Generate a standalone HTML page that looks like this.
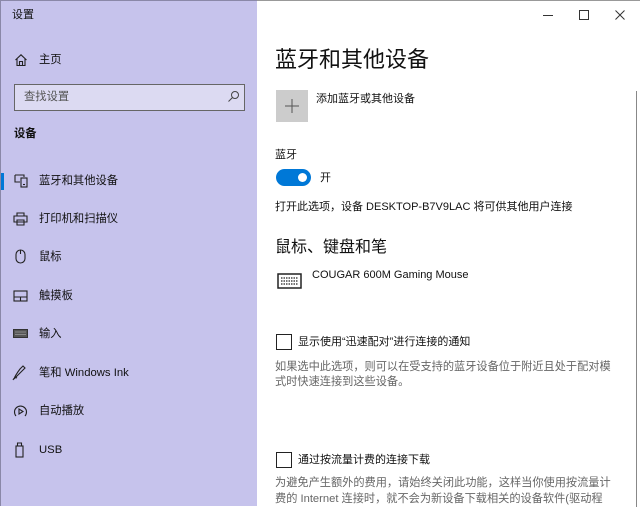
<!DOCTYPE html>
<html><head><meta charset="utf-8"><style>
*{margin:0;padding:0;box-sizing:border-box}
body{width:640px;height:506px;overflow:hidden;position:relative;font-family:"Liberation Sans","Noto Sans CJK SC",sans-serif;color:#111;background:#fff}
.side{position:absolute;left:0;top:0;width:257px;height:506px;background:#c6c3ec;border-left:1px solid #8a88a8;border-top:1px solid #8a88a8}
.main{position:absolute;left:257px;top:0;width:383px;height:506px;background:#fff;border-top:1px solid #999}
.t{position:absolute;white-space:nowrap;font-size:11.3px;line-height:14px}
.ic{position:absolute}
</style></head><body>
<div class="side">
<div class="t" style="left:11px;top:7px;font-size:11px">设置</div>
<svg class="ic" style="left:13px;top:52px" width="14" height="14" viewBox="0 0 14 14" fill="none" stroke="#222" stroke-width="1.1"><path d="M1.5 7L7 1.8L12.5 7M3 5.6V12.5H11V5.6M5.5 12.5V8.5H8.5V12.5"/></svg>
<div class="t" style="left:38px;top:52px">主页</div>
<div style="position:absolute;left:13px;top:83px;width:231px;height:27px;border:1px solid #666;background:#dcdaf2"></div>
<div class="t" style="left:23px;top:89px;color:#555">查找设置</div>
<svg class="ic" style="left:226px;top:89px" width="13" height="13" viewBox="0 0 13 13" fill="none" stroke="#444" stroke-width="1"><circle cx="8" cy="5" r="3.5"/><path d="M5.5 7.5L1.5 11.5"/></svg>
<div class="t" style="left:13px;top:126px;font-weight:bold">设备</div>
<div style="position:absolute;left:0;top:172px;width:3px;height:17px;background:#0078d7"></div>
<svg class="ic" style="left:13px;top:173px" width="15" height="14" viewBox="0 0 15 14" fill="none" stroke="#222" stroke-width="1.1"><path d="M1 1H10V3M1 1V8H6"/><rect x="7" y="4" width="6" height="9"/><path d="M9 10.5H11"/></svg>
<div class="t" style="left:38px;top:173px">蓝牙和其他设备</div>
<svg class="ic" style="left:12px;top:211px" width="15" height="14" viewBox="0 0 15 14" fill="none" stroke="#222" stroke-width="1.1"><path d="M4 4V1H11V4M1 4H14V10H1ZM4 8H11V13H4Z"/></svg>
<div class="t" style="left:38px;top:211px">打印机和扫描仪</div>
<svg class="ic" style="left:14px;top:248px" width="12" height="15" viewBox="0 0 12 15" fill="none" stroke="#222" stroke-width="1.1"><rect x="1" y="1" width="9" height="13" rx="4.5"/><path d="M5.5 1V5"/></svg>
<div class="t" style="left:38px;top:249px">鼠标</div>
<svg class="ic" style="left:12px;top:289px" width="15" height="12" viewBox="0 0 15 12" fill="none" stroke="#222" stroke-width="1.1"><rect x="1" y="1" width="13" height="10"/><path d="M1 7H14M7.5 7V11"/></svg>
<div class="t" style="left:38px;top:288px">触摸板</div>
<svg class="ic" style="left:12px;top:328px" width="15" height="10" viewBox="0 0 15 10"><rect x="0.5" y="0.5" width="14" height="8" fill="#555" stroke="#333"/><path d="M2 3H13M2 5.5H13" stroke="#999" stroke-width=".8"/></svg>
<div class="t" style="left:38px;top:326px">输入</div>
<svg class="ic" style="left:11px;top:364px" width="15" height="16" viewBox="0 0 15 16" fill="none" stroke="#222" stroke-width="1.1"><path d="M2 14C3 11 5 8 8 4L11 1L13 3L10 6C7 9 5 11 2 14ZM1 15C2 13 3 12 5 13"/></svg>
<div class="t" style="left:38px;top:365px">笔和 Windows Ink</div>
<svg class="ic" style="left:12px;top:403px" width="15" height="15" viewBox="0 0 15 15" fill="none" stroke="#222" stroke-width="1.1"><path d="M3 12A6 6 0 1 1 12 12"/><path d="M6 5V10L10 7.5Z"/></svg>
<div class="t" style="left:38px;top:403px">自动播放</div>
<svg class="ic" style="left:14px;top:441px" width="10" height="16" viewBox="0 0 10 16" fill="none" stroke="#222" stroke-width="1.1"><rect x="1" y="4" width="7" height="11"/><path d="M2.5 4V1H6.5V4"/></svg>
<div class="t" style="left:38px;top:442px">USB</div>
</div>
<div class="main">
<svg class="ic" style="left:285px;top:8px" width="12" height="12"><path d="M1 6.5H11" stroke="#333"/></svg>
<svg class="ic" style="left:321px;top:8px" width="12" height="12"><rect x="1.5" y="1.5" width="9" height="9" fill="none" stroke="#333"/></svg>
<svg class="ic" style="left:357px;top:8px" width="12" height="12"><path d="M1.5 1.5L10.5 10.5M10.5 1.5L1.5 10.5" stroke="#333"/></svg>
<div style="position:absolute;left:379px;top:90px;width:1px;height:416px;background:#888"></div>
<div class="t" style="left:18px;top:45px;font-size:22px;line-height:28px">蓝牙和其他设备</div>
<div style="position:absolute;left:19px;top:89px;width:32px;height:32px;background:#ccc"></div>
<svg class="ic" style="left:27px;top:97px" width="16" height="16"><path d="M8 1V15M1 8H15" stroke="#555" stroke-width="1"/></svg>
<div class="t" style="left:59px;top:91px;font-size:11px">添加蓝牙或其他设备</div>
<div class="t" style="left:18px;top:147px;font-size:11px">蓝牙</div>
<div style="position:absolute;left:19px;top:168px;width:35px;height:17px;border-radius:9px;background:#0078d7"></div>
<div style="position:absolute;left:41px;top:172px;width:9px;height:9px;border-radius:50%;background:#fff"></div>
<div class="t" style="left:63px;top:170px;font-size:11px">开</div>
<div class="t" style="left:18px;top:199px;font-size:11px">打开此选项，设备 DESKTOP-B7V9LAC 将可供其他用户连接</div>
<div class="t" style="left:18px;top:237px;font-size:16px;line-height:20px">鼠标、键盘和笔</div>
<svg class="ic" style="left:20px;top:272px" width="25" height="16" viewBox="0 0 25 16"><rect x="1" y="1" width="23" height="14" fill="none" stroke="#222" stroke-width="1.5"/><path d="M4 5H21M4 8H21M4 11H21" stroke="#222" stroke-width="1.2" stroke-dasharray="1.5 1"/></svg>
<div class="t" style="left:55px;top:267px;font-size:11px">COUGAR 600M Gaming Mouse</div>
<div style="position:absolute;left:19px;top:333px;width:16px;height:16px;border:1.5px solid #222"></div>
<div class="t" style="left:41px;top:334px;font-size:11px">显示使用“迅速配对”进行连接的通知</div>
<div class="t" style="left:18px;top:359px;color:#666;line-height:15px;font-size:11.2px">如果选中此选项，则可以在受支持的蓝牙设备位于附近且处于配对模<br>式时快速连接到这些设备。</div>
<div style="position:absolute;left:19px;top:451px;width:16px;height:16px;border:1.5px solid #222"></div>
<div class="t" style="left:41px;top:452px;font-size:11px">通过按流量计费的连接下载</div>
<div class="t" style="left:18px;top:474px;color:#666;line-height:16px;font-size:11.2px">为避免产生额外的费用，请始终关闭此功能，这样当你使用按流量计<br>费的 Internet 连接时，就不会为新设备下载相关的设备软件(驱动程</div>
</div>
</body></html>
